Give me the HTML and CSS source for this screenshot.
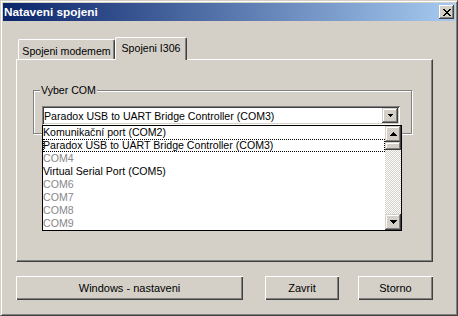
FILE: index.html
```html
<!DOCTYPE html>
<html lang="cs">
<head>
  <meta charset="UTF-8">
  <title>Nataveni spojeni</title>
  <link rel="stylesheet" href="styles.css">
</head>
<body>
  <div class="window">
    <div class="titlebar">
      <span class="title">Nataveni spojeni</span>
      <button class="close-btn">
        <svg width="8" height="7" viewBox="0 0 8 7" shape-rendering="crispEdges">
          <path d="M0 0h2v1h-2z M6 0h2v1h-2z M1 1h2v1h-2z M5 1h2v1h-2z M2 2h4v1h-4z M3 3h2v1h-2z M2 4h4v1h-4z M1 5h2v1h-2z M5 5h2v1h-2z M0 6h2v1h-2z M6 6h2v1h-2z" fill="#000"/>
        </svg>
      </button>
    </div>

    <div class="dialog">
      <div class="tabs">
        <div class="tab tab-modem">Spojeni modemem</div>
        <div class="tab tab-active">Spojeni I306</div>
      </div>

      <div class="tab-panel">
        <div class="groupbox">
          <span class="group-label">Vyber COM</span>
          <div class="combo">
            <div class="combo-text">Paradox USB to UART Bridge Controller (COM3)</div>
            <span class="combo-btn raised">
              <svg width="5" height="3" viewBox="0 0 5 3" shape-rendering="crispEdges">
                <path d="M0 0h5v1h-1v1h-1v1h-1v-1h-1v-1h-1z" fill="#000"/>
              </svg>
            </span>

            <!-- open dropdown list -->
            <div class="dropdown">
              <ul class="items">
                <li>Komunikační port (COM2)</li>
                <li class="focused">Paradox USB to UART Bridge Controller (COM3)</li>
                <li class="disabled">COM4</li>
                <li>Virtual Serial Port (COM5)</li>
                <li class="disabled">COM6</li>
                <li class="disabled">COM7</li>
                <li class="disabled">COM8</li>
                <li class="disabled">COM9</li>
              </ul>
              <div class="scrollbar">
                <span class="sb-btn raised">
                  <svg width="7" height="4" viewBox="0 0 7 4" shape-rendering="crispEdges">
                    <path d="M3 0h1v1h1v1h1v1h1v1h-7v-1h1v-1h1v-1h1z" fill="#000"/>
                  </svg>
                </span>
                <span class="sb-thumb raised"></span>
                <span class="sb-track"></span>
                <span class="sb-btn raised">
                  <svg width="7" height="4" viewBox="0 0 7 4" shape-rendering="crispEdges">
                    <path d="M0 0h7v1h-1v1h-1v1h-1v1h-1v-1h-1v-1h-1v-1h-1z" fill="#000"/>
                  </svg>
                </span>
              </div>
            </div>
          </div>
        </div>
      </div>

      <div class="buttons">
        <button class="btn btn-windows">Windows - nastaveni</button>
        <button class="btn btn-zavrit">Zavrit</button>
        <button class="btn btn-storno">Storno</button>
      </div>
    </div>
  </div>
</body>
</html>
```

FILE: styles.css
```css
* {
  margin: 0;
  padding: 0;
  box-sizing: border-box;
}

body {
  font-family: 'Liberation Sans', Arial, sans-serif;
  font-size: 10.6px;
  color: #000;
  background-color: #d4d0c8;
}

.window {
  width: 458px;
  height: 316px;
  background-color: #d4d0c8;
  border: 1px solid;
  border-color: #d4d0c8 #404040 #404040 #d4d0c8;
  padding: 2px;
  box-shadow: inset 1px 1px #fff, inset -1px -1px #808080;
}

.titlebar {
  height: 18px;
  display: flex;
  justify-content: space-between;
  align-items: center;
  padding: 0 1px 0 1px;
  background: linear-gradient(to right, #0a246a, #a6caf0);
}

.title {
  color: #fff;
  font-weight: bold;
  font-size: 11.8px;
}

.close-btn {
  width: 15px;
  height: 14px;
  border: none;
  background-color: #d4d0c8;
  display: flex;
  justify-content: center;
  align-items: center;
  box-shadow: inset -1px -1px #404040, inset 1px 1px #fff, inset -2px -2px #808080;
}

.raised {
  background-color: #d4d0c8;
  display: flex;
  justify-content: center;
  align-items: center;
  box-shadow: inset -1px -1px #404040, inset 1px 1px #d4d0c8, inset -2px -2px #808080, inset 2px 2px #fff;
}

.dialog {
  padding: 16px 22px 0 13px;
}

/* Tabs */
.tabs {
  display: flex;
  align-items: flex-end;
  height: 22px;
}

.tab {
  height: 20px;
  display: flex;
  justify-content: center;
  align-items: center;
  padding-top: 2px;
  border-top: 1px solid #fff;
  border-left: 1px solid #fff;
  border-right: 1px solid #404040;
  border-radius: 2px 2px 0 0;
  box-shadow: inset -1px 0 #808080;
  white-space: nowrap;
}

.tab-modem {
  width: 97px;
  margin-left: 2px;
}

.tab-active {
  position: relative;
  z-index: 1;
  width: 72px;
  height: 23px;
  margin-bottom: -1px;
  padding-top: 0;
  padding-bottom: 3px;
  background-color: #d4d0c8;
}

.tab-panel {
  height: 203px;
  border: 1px solid;
  border-color: #fff #404040 #404040 #fff;
  box-shadow: inset -1px -1px #808080;
  padding: 30px 0 0 16px;
}

/* Group box */
.groupbox {
  width: 379px;
  height: 44px;
  border: 1px solid #808080;
  box-shadow: inset 1px 1px #fff, 1px 1px #fff;
  padding-left: 8px;
}

.group-label {
  display: block;
  width: fit-content;
  margin: -8px 0 0 -2px;
  padding: 0 1px;
  line-height: 14px;
  background-color: #d4d0c8;
}

.combo {
  position: relative;
  width: 358px;
  height: 19px;
  margin-top: 9px;
  padding: 2px;
  display: flex;
  align-items: center;
  background-color: #fff;
  box-shadow: inset 1px 1px #808080, inset -1px -1px #fff, inset 2px 2px #404040, inset -2px -2px #d4d0c8;
}

.combo-text {
  flex: 1;
  white-space: nowrap;
}

.combo-btn {
  width: 16px;
  height: 15px;
}

/* Dropdown list */
.dropdown {
  position: absolute;
  top: 19px;
  left: 0;
  z-index: 2;
  width: 360px;
  height: 106px;
  display: flex;
  border: 1px solid #000;
  background-color: #fff;
}

.items {
  flex: 1;
  list-style: none;
}

.items li {
  height: 13px;
  line-height: 13px;
  white-space: nowrap;
}

.items li.disabled {
  color: #888;
}

.items li.focused {
  outline: 1px dotted #000;
  outline-offset: -1px;
}

.scrollbar {
  width: 16px;
  display: flex;
  flex-direction: column;
}

.sb-btn {
  height: 16px;
}

.sb-thumb {
  height: 8px;
}

.sb-track {
  flex: 1;
  background-image: conic-gradient(#fff 25%, #d4d0c8 0 50%, #fff 0 75%, #d4d0c8 0);
  background-size: 2px 2px;
}

/* Bottom buttons */
.buttons {
  display: flex;
  margin-top: 14px;
}

.btn {
  height: 24px;
  border: none;
  background-color: #d4d0c8;
  font-family: inherit;
  font-size: 11px;
  color: #000;
  box-shadow: inset 1px 1px #fff, inset -1px -1px #404040, inset -2px -2px #808080;
}

.btn-windows {
  width: 227px;
}

.btn-zavrit {
  width: 74px;
  margin-left: 22px;
}

.btn-storno {
  width: 75px;
  margin-left: 19px;
}
```
